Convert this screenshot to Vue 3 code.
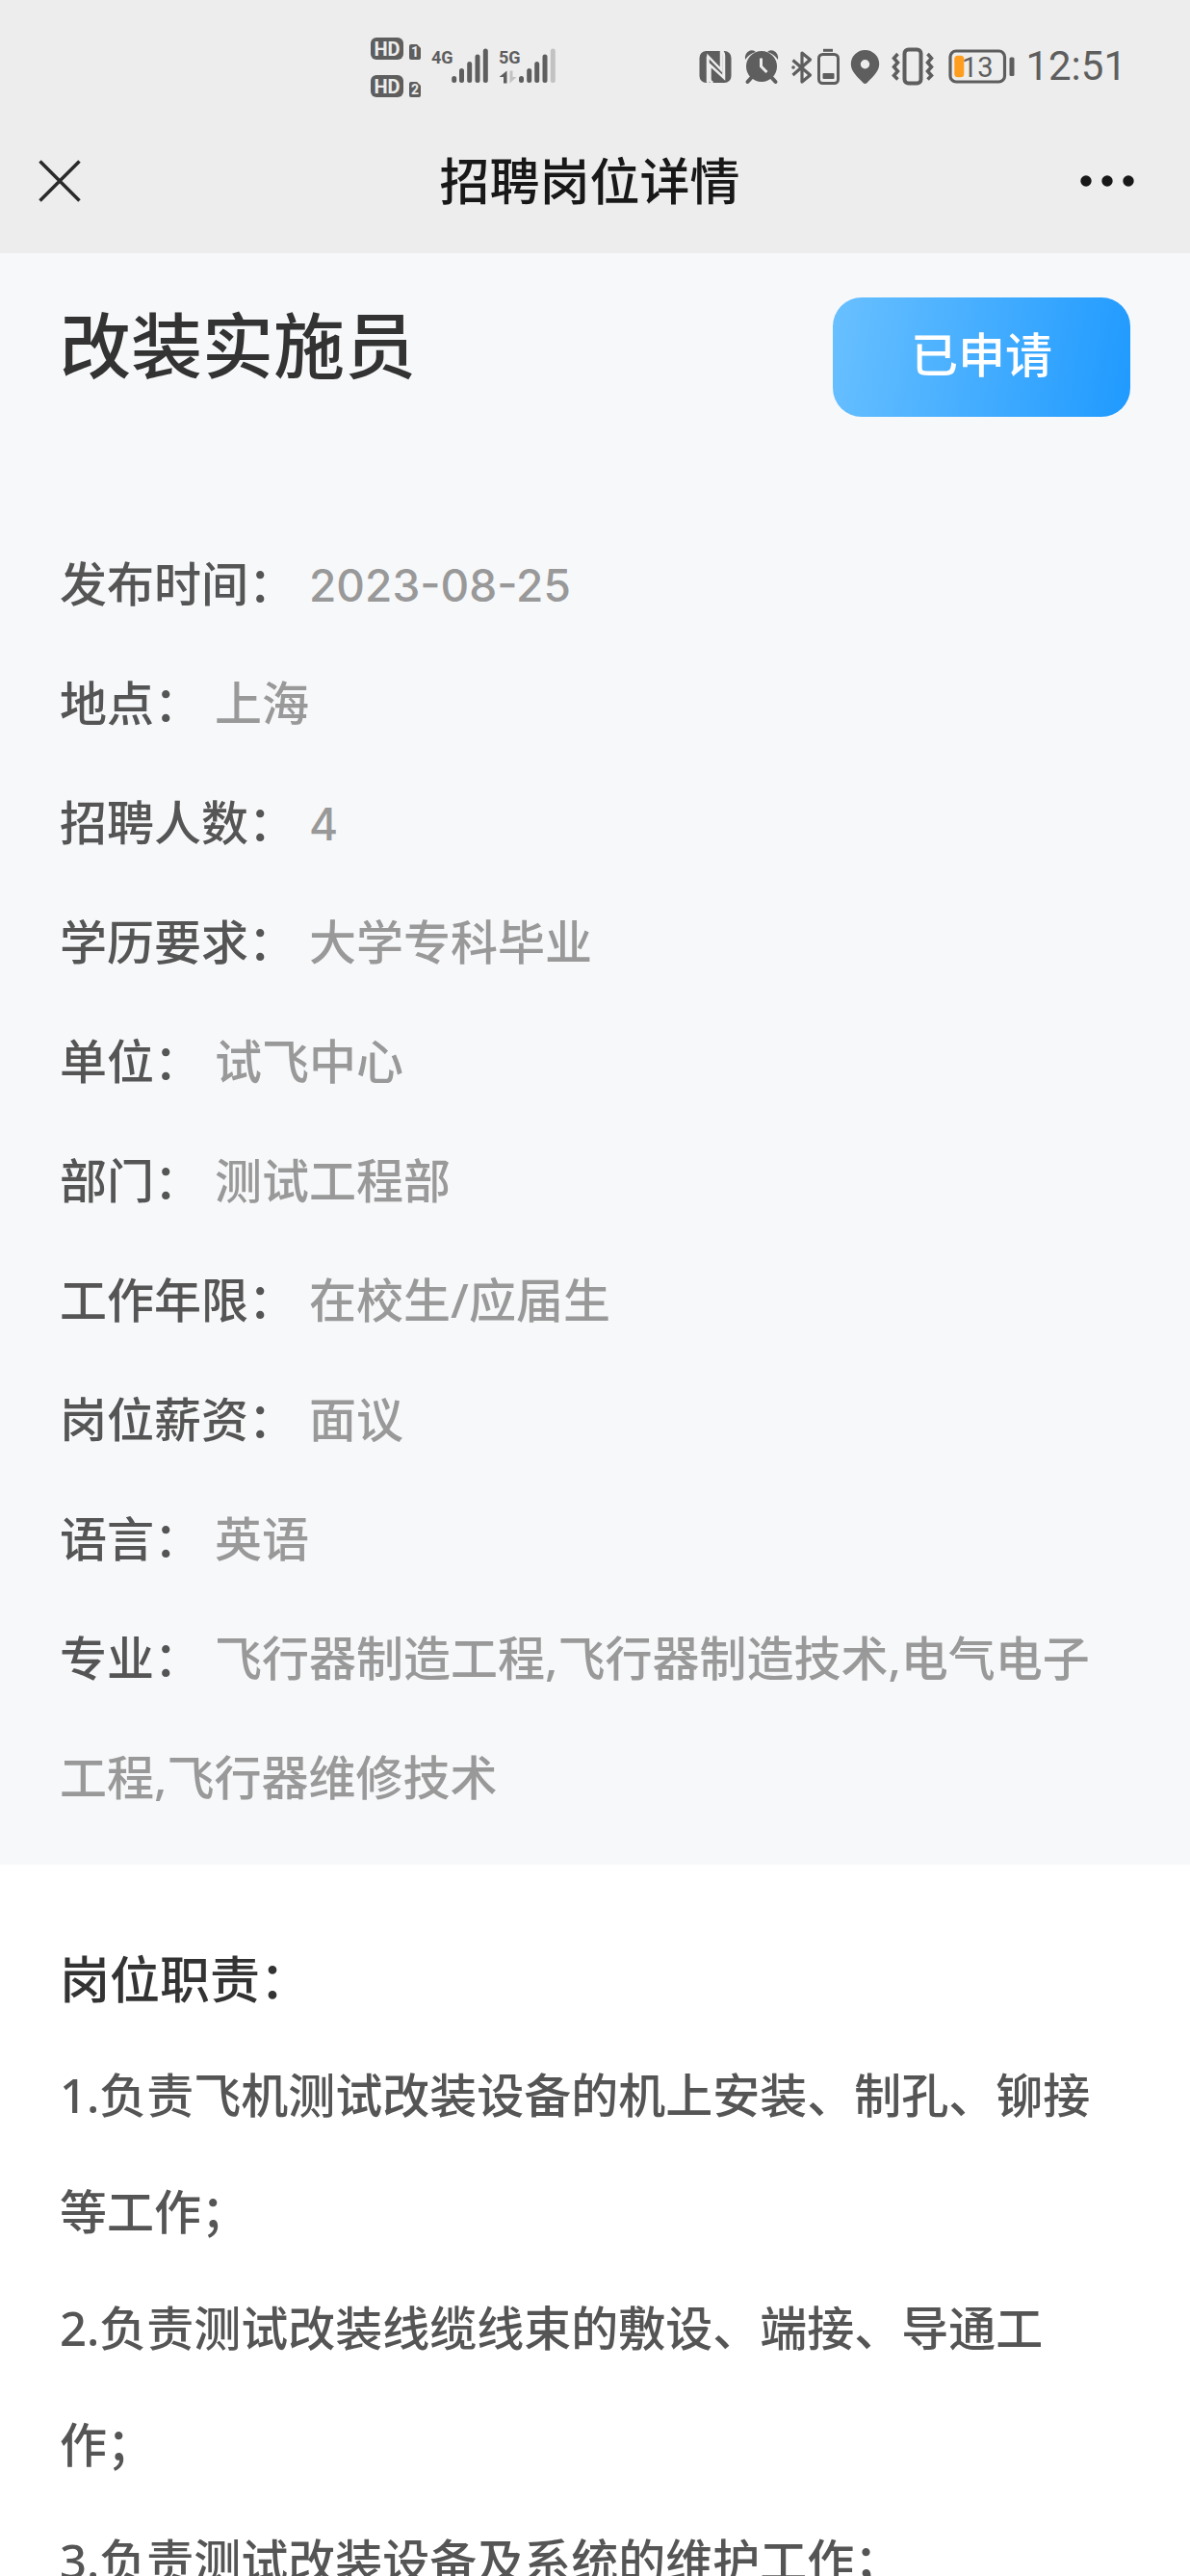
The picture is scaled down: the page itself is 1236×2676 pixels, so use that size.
<script setup>
const details = [
  { label: '发布时间', value: '2023-08-25', numeric: true },
  { label: '地点', value: '上海' },
  { label: '招聘人数', value: '4', numeric: true },
  { label: '学历要求', value: '大学专科毕业' },
  { label: '单位', value: '试飞中心' },
  { label: '部门', value: '测试工程部' },
  { label: '工作年限', value: '在校生/应届生' },
  { label: '岗位薪资', value: '面议' },
  { label: '语言', value: '英语' },
  { label: '专业', value: '飞行器制造工程,飞行器制造技术,电气电子工程,飞行器维修技术' },
]

const duties = [
  '1.负责飞机测试改装设备的机上安装、制孔、铆接等工作；',
  '2.负责测试改装线缆线束的敷设、端接、导通工作；',
  '3.负责测试改装设备及系统的维护工作；',
]
</script>

<template>
  <div class="page">
    <header class="top">
      <div class="status">
        <svg class="signals" width="194" height="66" viewBox="0 0 194 66" aria-label="信号">
          <g fill="#5e5e5e">
            <rect x="0" y="1" width="34" height="23" rx="6" />
            <rect x="0" y="40" width="34" height="23" rx="6" />
            <path d="M42 8h6l4 4v10q0 2-2 2h-8q-2 0-2-2V10q0-2 2-2z" />
            <path d="M42 47h6l4 4v10q0 2-2 2h-8q-2 0-2-2V49q0-2 2-2z" />
          </g>
          <g fill="#ededed" class="badge-text">
            <text x="17" y="20" font-size="20" text-anchor="middle">HD</text>
            <text x="17" y="59" font-size="20" text-anchor="middle">HD</text>
            <text x="46" y="21" font-size="14" text-anchor="middle">1</text>
            <text x="46" y="60" font-size="14" text-anchor="middle">2</text>
          </g>
          <g fill="#5e5e5e" class="badge-text" font-size="18">
            <text x="63" y="28">4G</text>
            <text x="133" y="28">5G</text>
          </g>
          <g stroke="#5e5e5e" stroke-width="5" stroke-linecap="round">
            <path d="M86.7 43.5v2M94.5 35.5v10M102.7 28.5v17M111 21v24.500M119.300 15v30.500" />
            <path d="M156.500 43.500v2M164.700 35.500v10M172.700 28.500v17M181 21v24.500" />
            <path d="M189.300 15v30.500" stroke="#c2c2c2" />
          </g>
          <path d="M141.500 35.500v13h-3.500v-6.500h-4.500z" fill="#5e5e5e" />
          <path d="M144.500 35.500v13l7-6.500h-4v-6.500z" fill="#c2c2c2" />
        </svg>

        <div class="status-right">
          <svg width="328" height="42" viewBox="0 0 328 42" aria-label="状态">
            <rect x="0.500" y="5" width="33" height="33" rx="7" fill="#5e5e5e" />
            <path d="M9.500 38V10.500L23 24.500V5M23 5q3 1 3 5v23L11.500 19.500V34q0 3 3 4" fill="none" stroke="#ededed" stroke-width="2.500" />
            <path d="M8.500 10.500v27M25 5.500v27" stroke="#ededed" stroke-width="1.500" />

            <g fill="#5e5e5e">
              <circle cx="65" cy="21" r="16" />
              <path d="M48 14q-1-7 5-9.500 4-1 6 1.500-7 2-11 8zM82 14q1-7-5-9.500-4-1-6 1.500 7 2 11 8z" />
            </g>
            <path d="M55 32l-4.500 5M75 32l4.500 5" stroke="#5e5e5e" stroke-width="4" stroke-linecap="round" />
            <path d="M64.500 12.500V21l6 6" fill="none" stroke="#ededed" stroke-width="3" />

            <path d="M97.500 14.500L115.500 30 107 37V7l8.500 7L97.500 30" fill="none" stroke="#5e5e5e" stroke-width="3.200" stroke-linejoin="round" />
            <circle cx="98" cy="22" r="1.800" fill="#5e5e5e" />

            <rect x="124.500" y="8.500" width="20" height="30" rx="4" fill="none" stroke="#5e5e5e" stroke-width="3" />
            <path d="M129 4.300h10" stroke="#5e5e5e" stroke-width="3" />
            <rect x="128.500" y="28" width="12" height="6" rx="1" fill="#5e5e5e" />

            <path fill-rule="evenodd" d="M172.500 4a14.700 14.700 0 0 1 14.700 14.700c0 7-6 12.300-11.700 18.300q-3 4-6 0c-5.700-6-11.700-11.300-11.700-18.300A14.700 14.700 0 0 1 172.500 4zm0 10a4.700 4.700 0 1 0 0 9.400 4.700 4.700 0 0 0 0-9.400z" fill="#5e5e5e" />

            <rect x="213.500" y="3.500" width="17" height="35" rx="4" fill="none" stroke="#5e5e5e" stroke-width="4" />
            <path d="M206.500 8l-4 4.500 4 4.500-4 4.500 4 4.500-4 4.500 4 4M237.500 8l4 4.500-4 4.500 4 4.500-4 4.500 4 4.500-4 4" fill="none" stroke="#5e5e5e" stroke-width="3.500" />

            <rect x="261" y="5" width="56.500" height="32" rx="6" fill="none" stroke="#5e5e5e" stroke-width="3.200" />
            <rect x="322.500" y="11.500" width="5" height="19.500" rx="1.500" fill="#5e5e5e" />
            <rect x="265.300" y="9.700" width="10" height="22.600" rx="3.500" fill="#ff9d1e" />
            <text x="273" y="32" font-size="29" fill="#5e5e5e" class="level">13</text>
          </svg>
          <span class="clock">12:51</span>
        </div>
      </div>

      <nav class="nav">
        <button class="icon-button close" type="button" aria-label="关闭">
          <svg width="46" height="46" viewBox="0 0 46 46">
            <path d="M2.500 2.500l41 41M43.500 2.500l-41 41" stroke="#2a2a2a" stroke-width="3.500" />
          </svg>
        </button>
        <h1 class="nav-title">招聘岗位详情</h1>
        <button class="icon-button" type="button" aria-label="更多">
          <svg width="56" height="12" viewBox="0 0 56 12" fill="#181818">
            <circle cx="6" cy="6" r="5.700" />
            <circle cx="28" cy="6" r="5.700" />
            <circle cx="50" cy="6" r="5.700" />
          </svg>
        </button>
      </nav>
    </header>

    <section class="summary">
      <div class="summary-head">
        <h2 class="job-title">改装实施员</h2>
        <button class="apply" type="button">已申请</button>
      </div>
      <dl class="details">
        <div v-for="item in details" :key="item.label" class="row">
          <dt>{{ item.label }}：</dt>
          <dd :class="{ numeric: item.numeric }">{{ item.value }}</dd>
        </div>
      </dl>
    </section>

    <section class="duties">
      <h3 class="duties-title">岗位职责：</h3>
      <p v-for="duty in duties" :key="duty" class="duty">{{ duty }}</p>
    </section>
  </div>
</template>

<style>
body {
  margin: 0;
  background: #fff;
}
</style>

<style scoped>
.page {
  height: 100vh;
  overflow: hidden;
  font-family: "Noto Sans", "Noto Sans CJK SC", sans-serif;
  font-size: 49px;
  font-weight: 500;
  color: #555;
}

h1,
h2,
h3,
p,
dl,
dd {
  margin: 0;
}

button {
  border: 0;
  font: inherit;
}

.top {
  background: #ededed;
}

.status {
  display: flex;
  justify-content: space-between;
  align-items: center;
  height: 112px;
  padding: 26px 66px 0 385px;
  box-sizing: border-box;
}

.signals {
  margin-top: 4px;
}

.badge-text {
  font-family: Roboto, sans-serif;
  font-weight: 700;
}

.level {
  font-family: Roboto, sans-serif;
  font-weight: 400;
}

.status-right {
  display: flex;
  align-items: center;
  gap: 11px;
}

.clock {
  font-family: Roboto, sans-serif;
  font-size: 42px;
  font-weight: 400;
  line-height: 42px;
  color: #5e5e5e;
}

.nav {
  display: flex;
  justify-content: space-between;
  align-items: center;
  height: 151px;
  padding: 0 58px 0 39px;
}

.icon-button {
  display: flex;
  align-items: center;
  width: 56px;
  height: 56px;
  padding: 0;
  background: none;
}

.close {
  width: 64px;
}

.nav-title {
  font-size: 52px;
  font-weight: 500;
  line-height: 72px;
  color: #181818;
}

.summary {
  padding: 46px 62px 29px;
  background: #f7f8fa;
}

.summary-head {
  display: flex;
  justify-content: space-between;
  align-items: flex-start;
  margin-bottom: 111px;
}

.job-title {
  font-size: 74px;
  font-weight: 500;
  line-height: 100px;
  color: #333;
}

.apply {
  min-width: 309px;
  height: 124px;
  padding: 0 0 12px;
  border-radius: 30px;
  background: linear-gradient(100deg, #69c0ff, #1f9aff);
  color: #fff;
}

.row {
  line-height: 124px;
}

.row dt,
.row dd {
  display: inline;
}

.row dt {
  margin-right: 14px;
}

.row dd {
  color: #999;
}

.row .numeric {
  font-family: Inter, sans-serif;
  font-size: 46px;
  line-height: 1;
}

.duties {
  padding: 58px 62px 0;
}

.duties-title {
  font-size: 52px;
  font-weight: 500;
  line-height: 121px;
  color: #333;
}

.duty {
  line-height: 121px;
}
</style>
